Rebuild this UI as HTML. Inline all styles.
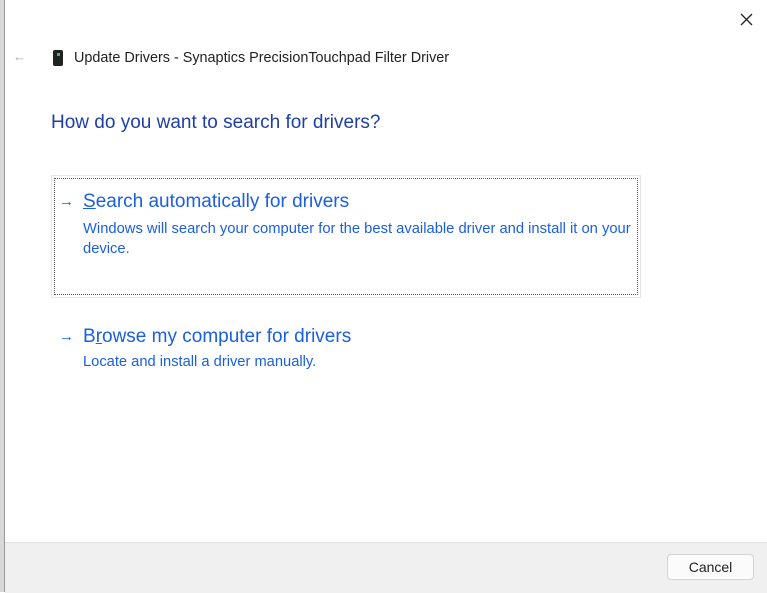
<!DOCTYPE html>
<html><head><style>
body{margin:0;width:767px;height:592px;overflow:hidden;background:#fff;font-family:"Liberation Sans",sans-serif;position:relative}
.strip{position:absolute;left:0;top:0;width:4px;height:592px;background:#d8d8d8}
.win{position:absolute;left:4px;top:0;width:763px;height:592px;background:#fff;border-left:1px solid #999;box-sizing:border-box}
.abs{position:absolute;white-space:nowrap}
.blue{color:#1a5fe0}
</style></head><body>
<div class="strip"></div>
<div class="win"></div>
<svg class="abs" style="left:740px;top:13px" width="13" height="13"><path d="M1 1L12 12M12 1L1 12" stroke="#222" stroke-width="1.3"/></svg>
<div class="abs" style="left:13px;top:49px;font-size:13px;color:#aaa">←</div>
<div class="abs" style="left:53px;top:50px;width:10px;height:16px;background:#222;border-radius:2px"></div>
<div class="abs" style="left:57px;top:53px;width:3px;height:3px;background:#3c3"></div>
<div class="abs" style="left:74px;top:50px;font-size:14.4px;color:#222">Update Drivers - Synaptics PrecisionTouchpad Filter Driver</div>
<div class="abs" style="left:51px;top:112px;font-size:19px;color:#1e3fa8">How do you want to search for drivers?</div>
<div class="abs" style="left:51px;top:175px;width:590px;height:123px;border:1px solid #e6e6e6;box-sizing:border-box"></div>
<div class="abs" style="left:54px;top:178px;width:584px;height:117px;border:1px dotted #555;box-sizing:border-box"></div>
<div class="abs blue" style="left:59px;top:193px;font-size:15px">→</div>
<div class="abs blue" style="left:83px;top:191px;font-size:19px"><u>S</u>earch automatically for drivers</div>
<div class="abs blue" style="left:83px;top:219px;font-size:14.75px;line-height:20px;white-space:normal;width:560px">Windows will search your computer for the best available driver and install it on your device.</div>
<div class="abs blue" style="left:59px;top:328px;font-size:15px">→</div>
<div class="abs blue" style="left:83px;top:326px;font-size:19px">B<u>r</u>owse my computer for drivers</div>
<div class="abs blue" style="left:83px;top:354px;font-size:14.7px">Locate and install a driver manually.</div>
<div class="abs" style="left:5px;top:542px;width:762px;height:50px;background:#f0f0f0;border-top:1px solid #e4e4e4"></div>
<div class="abs" style="left:667px;top:554px;width:87px;height:26px;background:#fbfbfb;border:1px solid #d4d4d4;border-radius:4px;box-sizing:border-box;font-size:14px;color:#222;text-align:center;line-height:24px">Cancel</div>
</body></html>
